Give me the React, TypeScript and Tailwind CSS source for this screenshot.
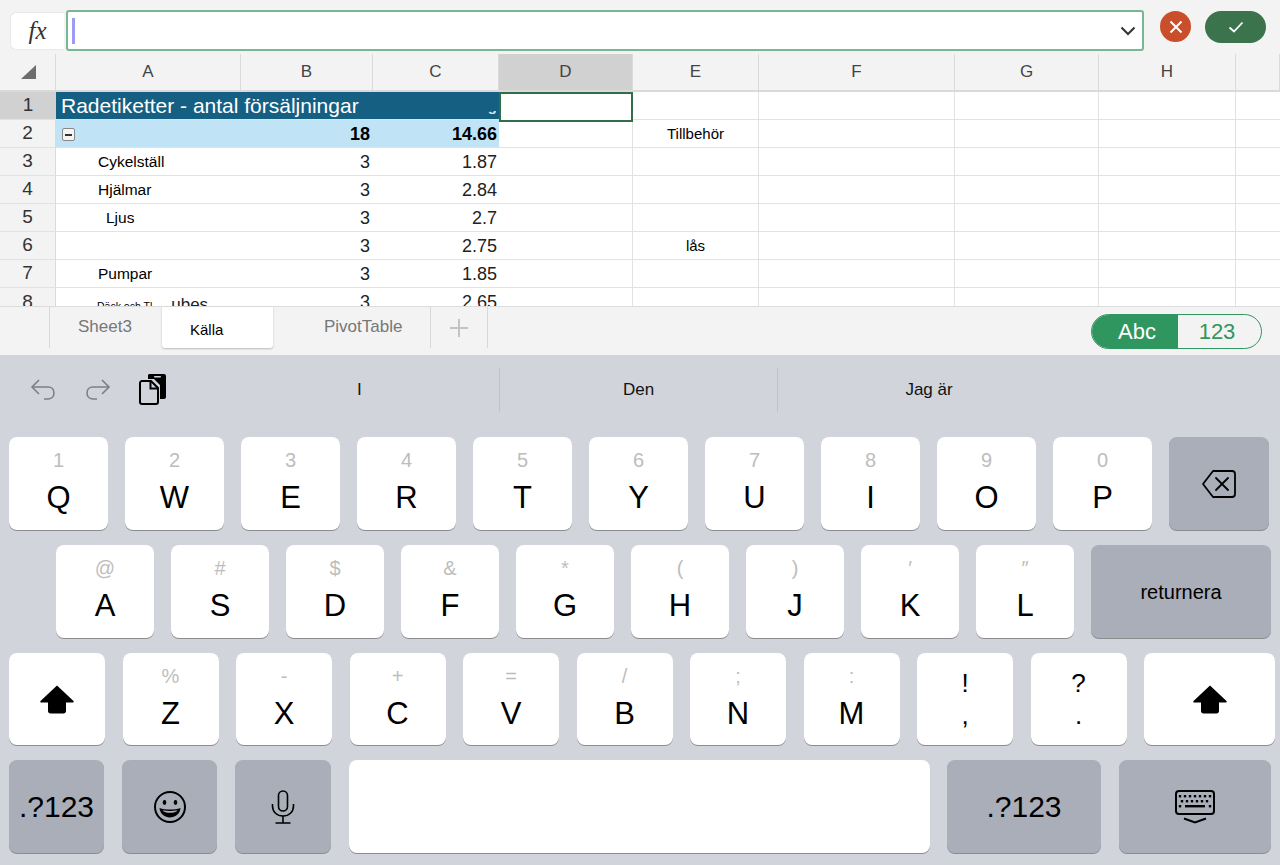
import React from "react";

const sans = "font-['Liberation_Sans',Arial,sans-serif]";

const columns = [
  { name: "A", w: "w-[185px]" },
  { name: "B", w: "w-[132px]" },
  { name: "C", w: "w-[126px]" },
  { name: "D", w: "w-[134px]" },
  { name: "E", w: "w-[126px]" },
  { name: "F", w: "w-[196px]" },
  { name: "G", w: "w-[144px]" },
  { name: "H", w: "w-[137px]" },
  { name: "", w: "w-[44px]" },
];

const rows = [
  { n: "2", h: "h-[28px]", a: "", b: "18", c: "14.66", e: "Tillbehör" },
  { n: "3", h: "h-[28px]", a: "Cykelställ", b: "3", c: "1.87" },
  { n: "4", h: "h-[28px]", a: "Hjälmar", b: "3", c: "2.84" },
  { n: "5", h: "h-[28px]", a: "Ljus", b: "3", c: "2.7" },
  { n: "6", h: "h-[28px]", a: "", b: "3", c: "2.75", e: "lås" },
  { n: "7", h: "h-[28px]", a: "Pumpar", b: "3", c: "1.85" },
];

const Undo = () => (
  <svg width="28" height="28" viewBox="0 0 28 28" fill="none" stroke="#7d7f85" strokeWidth="1.6">
    <path d="M10 4 L3 11 L10 18" />
    <path d="M3 11 H19 C23 11 25 14 25 17 C25 21 22 23 19 23 H15" />
  </svg>
);

const Redo = () => (
  <svg width="28" height="28" viewBox="0 0 28 28" fill="none" stroke="#7d7f85" strokeWidth="1.6">
    <path d="M18 4 L25 11 L18 18" />
    <path d="M25 11 H9 C5 11 3 14 3 17 C3 21 6 23 9 23 H13" />
  </svg>
);

const Clipboard = () => (
  <svg width="28" height="32" viewBox="0 0 28 32" fill="none">
    <path d="M9 1.5 C9 .7 9.7 0 10.500 0 H25 C26.100 0 27 .9 27 2 V23 C27 24.100 26.100 25 25 25 H21 V11 L15 5 H9 Z" fill="#000" />
    <rect x="15" y="2" width="7" height="1.500" rx=".7" fill="#d1d4db" />
    <path d="M3 7 H12 L19 14 V28 C19 29.100 18.100 30 17 30 H3 C1.900 30 1 29.100 1 28 V9 C1 7.900 1.900 7 3 7 Z" fill="#d1d4db" stroke="#000" strokeWidth="2" />
    <path d="M11.500 7 V14.500 H19" fill="none" stroke="#000" strokeWidth="2" />
  </svg>
);

const Shift = () => (
  <svg width="36" height="30" viewBox="0 0 36 30">
    <path d="M18 1.500 L34.500 17 C35 17.800 34.600 18.500 33.800 18.500 H27 V27 C27 28.500 26 29.500 24.500 29.500 H11.500 C10 29.500 9 28.500 9 27 V18.500 H2.200 C1.400 18.500 1 17.800 1.500 17 Z" fill="#000" />
  </svg>
);

const Backspace = () => (
  <svg width="36" height="30" viewBox="0 0 36 30" fill="none" stroke="#000" strokeWidth="1.800" strokeLinejoin="round">
    <path d="M12 2 H31 C33 2 34 3 34 5 V25 C34 27 33 28 31 28 H12 L2 15 Z" />
    <path d="M15 9 L27 21 M27 9 L15 21" strokeLinecap="round" />
  </svg>
);

const Smile = () => (
  <svg width="34" height="34" viewBox="0 0 34 34" fill="none" stroke="#000" strokeWidth="2">
    <circle cx="17" cy="17" r="15" />
    <ellipse cx="11.500" cy="12.500" rx="1.800" ry="2.400" fill="#000" stroke="none" />
    <ellipse cx="22.500" cy="12.500" rx="1.800" ry="2.400" fill="#000" stroke="none" />
    <path d="M6.500 18 C12 20 22 20 27.500 18 C27 24 22 27.500 17 27.500 C12 27.500 7 24 6.500 18 Z" fill="#000" stroke="none" />
    <path d="M9.500 20.200 C14 21.200 20 21.200 24.500 20.200 C23.500 22 20 22.800 17 22.800 C14 22.800 10.500 22 9.500 20.200 Z" fill="#a9aeb9" stroke="none" />
  </svg>
);

const Mic = () => (
  <svg width="24" height="34" viewBox="0 0 24 34" fill="none" stroke="#000" strokeWidth="1.600">
    <rect x="7.500" y="1" width="9" height="20" rx="4.500" />
    <path d="M1.500 14 V16 C1.500 22 6 26 12 26 C18 26 22.500 22 22.500 16 V14" />
    <path d="M12 26 V33 M4.500 33 H19.500" />
  </svg>
);

const Keyboard = () => (
  <svg width="40" height="34" viewBox="0 0 40 34" fill="none">
    <rect x="1" y="1" width="38" height="23" rx="3" stroke="#000" strokeWidth="2" />
    {[5, 10, 15, 20, 25, 30, 35].map((x) => (
      <rect key={"a" + x} x={x - 1.2} y="5" width="2.400" height="2.400" fill="#000" />
    ))}
    {[7, 12, 17, 22, 27, 32].map((x) => (
      <rect key={"b" + x} x={x - 1.2} y="10" width="2.400" height="2.400" fill="#000" />
    ))}
    <rect x="3.800" y="15" width="2.400" height="2.400" fill="#000" />
    <rect x="10" y="15" width="20" height="2.400" fill="#000" />
    <rect x="33.800" y="15" width="2.400" height="2.400" fill="#000" />
    <path d="M9 28.500 L20 32.500 L31 28.500" stroke="#000" strokeWidth="2" />
  </svg>
);

const Key = ({
  w,
  top,
  main,
  dark,
  children,
}: {
  w: string;
  top?: string;
  main?: string;
  dark?: boolean;
  children?: React.ReactNode;
}) => (
  <div
    className={`${w} h-full shrink-0 rounded-[8px] flex flex-col items-center justify-center shadow-[0_1px_0_#8a8c90] ${
      dark ? "bg-[#a9aeb9]" : "bg-white"
    }`}
  >
    {top !== undefined && <span className="h-[22px] mt-[-2px] text-[20px] leading-[22px] text-[#bdbdbd]">{top}</span>}
    {main && <span className="mt-[9px] text-[31px] leading-[36px] text-black">{main}</span>}
    {children}
  </div>
);

export default function App() {
  return (
    <div className={`${sans} w-[1280px] h-[865px] overflow-hidden flex flex-col bg-[#f3f3f3]`}>
      {/* formula bar */}
      <div className="h-[54px] shrink-0 flex items-start pl-[10px] bg-[#f3f3f3]">
        <div className="mt-[12px] w-[54px] h-[38px] bg-white rounded-l-[6px] border border-r-0 border-[#e8e8e8] flex items-center justify-center font-['Liberation_Serif',serif] italic text-[25px] text-[#333]">
          fx
        </div>
        <div className="ml-[2px] mt-[10px] w-[1078px] h-[41px] bg-white border-2 border-[#78b795] rounded-[3px] flex items-center justify-between pl-[4px] pr-[6px]">
          <div className="w-[3px] h-[26px] bg-[#9c9cf6]" />
          <svg width="16" height="10" viewBox="0 0 16 10" fill="none" stroke="#333" strokeWidth="2">
            <path d="M1.500 1.500 L8 8 L14.500 1.500" />
          </svg>
        </div>
        <div className="ml-[16px] mt-[11px] w-[31px] h-[31px] rounded-full bg-[#c84f2a] flex items-center justify-center">
          <svg width="14" height="14" viewBox="0 0 14 14" stroke="#fff" strokeWidth="2">
            <path d="M1.500 1.500 L12.500 12.500 M12.500 1.500 L1.500 12.500" />
          </svg>
        </div>
        <div className="ml-[14px] mt-[11px] w-[61px] h-[32px] rounded-full bg-[#3b734d] flex items-center justify-center">
          <svg width="16" height="12" viewBox="0 0 16 12" fill="none" stroke="#fff" strokeWidth="1.800">
            <path d="M1.500 6.500 L6 10.500 L14.500 1.500" />
          </svg>
        </div>
      </div>

      {/* sheet */}
      <div className="h-[252px] shrink-0 overflow-hidden bg-white">
        <div className="h-[38px] flex bg-[#f3f3f3] border-b-2 border-[#dadada] text-[#444] text-[17px]">
          <div className="w-[56px] shrink-0 flex items-center justify-center border-r border-[#dadada]">
            <svg width="16" height="16" viewBox="0 0 16 16">
              <path d="M16 1 V15 H1 Z" fill="#6d6d6d" />
            </svg>
          </div>
          {columns.map((c) => (
            <div
              key={c.name || "rest"}
              className={`${c.w} shrink-0 flex items-center justify-center border-r border-[#dadada] ${
                c.name === "D" ? "bg-[#d1d1d1]" : ""
              }`}
            >
              {c.name}
            </div>
          ))}
        </div>

        {/* row 1 */}
        <div className="h-[28px] flex border-b border-[#e2e2e2]">
          <div className="w-[56px] shrink-0 bg-[#d1d1d1] text-[#333] text-[19px] flex items-center justify-center">1</div>
          <div className="relative w-[443px] shrink-0 bg-[#156082] text-white text-[21px] leading-[28px] pl-[5px] whitespace-nowrap overflow-hidden">
            Radetiketter - antal försäljningar
            <div className="absolute right-[3px] bottom-0 h-[8px] w-[120px] overflow-hidden text-[15px] font-bold leading-[8px] text-right text-[#d8e6ee]">
              <span className="relative top-[-9px] block">Summa av rating</span>
            </div>
          </div>
          <div className="relative z-10 w-[134px] h-[30px] shrink-0 border-2 border-[#2f6f4a] bg-white" />
          <div className="w-[126px] shrink-0 border-r border-[#e2e2e2]" />
          <div className="w-[196px] shrink-0 border-r border-[#e2e2e2]" />
          <div className="w-[144px] shrink-0 border-r border-[#e2e2e2]" />
          <div className="w-[137px] shrink-0 border-r border-[#e2e2e2]" />
        </div>

        {rows.map((r) => (
          <Row key={r.n} {...r} />
        ))}

        {/* row 8, cut by the tab bar */}
        <div className="h-[28px] flex">
          <div className="w-[56px] shrink-0 bg-[#f3f3f3] border-r border-[#dadada] text-[#333] text-[19px] flex items-center justify-center">8</div>
          <div className="w-[185px] shrink-0 pl-[41px] pt-[4px] text-[10.500px] text-black whitespace-nowrap">
            Däck och Tl<span className="ml-[19px] text-[17px] text-[#222]">ubes</span>
          </div>
          <div className="w-[132px] shrink-0 pr-[3px] text-right text-[18px] text-[#222] leading-[28px]">3</div>
          <div className="w-[126px] shrink-0 pr-[2px] text-right text-[18px] text-[#222] leading-[28px]">2.65</div>
          <Blank />
        </div>
      </div>

      {/* sheet tabs */}
      <div className="h-[49px] shrink-0 flex items-start justify-between bg-[#f3f3f3] border-t border-[#dcdcdc] pl-[49px] pr-[18px]">
        <div className="flex items-start text-[17px] text-[#777]">
          <div className="w-[113px] h-[41px] border-l border-[#d8d8d8] pl-[28px] pt-[7px]">Sheet3</div>
          <div className="w-[111px] h-[41px] bg-white rounded-b-[3px] shadow-[0_1px_2px_#bbb] pl-[28px] pt-[12px] text-[15px] text-black">Källa</div>
          <div className="w-[157px] h-[41px] pl-[51px] pt-[7px]">PivotTable</div>
          <div className="w-[58px] h-[41px] border-x border-[#d8d8d8] flex items-center justify-center">
            <svg width="18" height="18" viewBox="0 0 18 18" stroke="#c4c4c4" strokeWidth="2">
              <path d="M9 0 V18 M0 9 H18" />
            </svg>
          </div>
        </div>
        <div className="mt-[7px] w-[171px] h-[35px] flex rounded-full border border-[#2f9660] overflow-hidden text-[22px]">
          <div className="w-[86px] bg-[#2f9660] text-white flex items-center justify-center pl-[4px]">Abc</div>
          <div className="flex-1 text-[#2f9660] flex items-center justify-center pr-[5px]">123</div>
        </div>
      </div>

      {/* keyboard */}
      <div className="flex-1 bg-[#d1d4db]">
        <div className="h-[82px] pt-[13px] flex items-start">
          <div className="w-[500px] h-[44px] flex items-center border-r border-[#bfc2c9]">
            <div className="ml-[29px] flex items-center gap-[27px]">
              <Undo />
              <Redo />
              <Clipboard />
            </div>
            <span className="ml-[190px] text-[17px] text-[#111]">I</span>
          </div>
          <div className="w-[278px] h-[44px] flex items-center justify-center border-r border-[#bfc2c9] text-[17px] text-[#111]">Den</div>
          <div className="w-[302px] h-[44px] flex items-center justify-center text-[17px] text-[#111]">Jag är</div>
        </div>

        <div className="pl-[9px] flex flex-col gap-[15px]">
          <div className="h-[93px] flex gap-[17px]">
            {[
              ["1", "Q"],
              ["2", "W"],
              ["3", "E"],
              ["4", "R"],
              ["5", "T"],
              ["6", "Y"],
              ["7", "U"],
              ["8", "I"],
              ["9", "O"],
              ["0", "P"],
            ].map(([t, m]) => (
              <Key key={m} w="w-[99px]" top={t} main={m} />
            ))}
            <Key w="w-[100px]" dark>
              <Backspace />
            </Key>
          </div>

          <div className="h-[93px] flex gap-[17px] pl-[47px]">
            {[
              ["@", "A"],
              ["#", "S"],
              ["$", "D"],
              ["&", "F"],
              ["*", "G"],
              ["(", "H"],
              [")", "J"],
              ["′", "K"],
              ["″", "L"],
            ].map(([t, m]) => (
              <Key key={m} w="w-[98px]" top={t} main={m} />
            ))}
            <Key w="w-[180px]" dark>
              <span className="text-[20px] text-black">returnera</span>
            </Key>
          </div>

          <div className="h-[92px] flex gap-[17.500px]">
            <Key w="w-[96px]">
              <Shift />
            </Key>
            {[
              ["%", "Z"],
              ["-", "X"],
              ["+", "C"],
              ["=", "V"],
              ["/", "B"],
              [";", "N"],
              [":", "M"],
            ].map(([t, m]) => (
              <Key key={m} w="w-[96px]" top={t} main={m} />
            ))}
            <Key w="w-[96px]">
              <span className="text-[26px] leading-[32px] text-black">!</span>
              <span className="text-[26px] leading-[32px] text-black">,</span>
            </Key>
            <Key w="w-[96px]">
              <span className="text-[26px] leading-[32px] text-black">?</span>
              <span className="text-[26px] leading-[32px] text-black">.</span>
            </Key>
            <Key w="w-[131px]">
              <Shift />
            </Key>
          </div>

          <div className="h-[93px] flex">
            <Key w="w-[95px] mr-[18px]" dark>
              <span className="text-[30px] text-black">.?123</span>
            </Key>
            <Key w="w-[95px] mr-[18px]" dark>
              <Smile />
            </Key>
            <Key w="w-[96px] mr-[18px]" dark>
              <Mic />
            </Key>
            <Key w="w-[581px] mr-[17px]" />
            <Key w="w-[154px] mr-[18px]" dark>
              <span className="text-[30px] text-black">.?123</span>
            </Key>
            <Key w="w-[152px]" dark>
              <Keyboard />
            </Key>
          </div>
        </div>
      </div>
    </div>
  );
}

function Blank({ e }: { e?: string }) {
  return (
    <>
      <div className="w-[134px] shrink-0 border-r border-[#e2e2e2]" />
      <div className="w-[126px] shrink-0 border-r border-[#e2e2e2] text-center text-[15px] text-black leading-[28px]">{e}</div>
      <div className="w-[196px] shrink-0 border-r border-[#e2e2e2]" />
      <div className="w-[144px] shrink-0 border-r border-[#e2e2e2]" />
      <div className="w-[137px] shrink-0 border-r border-[#e2e2e2]" />
    </>
  );
}

function Row({ n, h, a, b, c, e }: { n: string; h: string; a: string; b: string; c: string; e?: string }) {
  const total = n === "2";
  return (
    <div className={`${h} flex border-b border-[#e2e2e2]`}>
      <div className="w-[56px] shrink-0 bg-[#f3f3f3] border-r border-[#dadada] text-[#333] text-[19px] flex items-center justify-center">{n}</div>
      <div className={`w-[443px] shrink-0 flex leading-[28px] text-[18px] text-[#222] ${total ? "bg-[#c0e4f5] font-bold text-black" : ""}`}>
        <div className="w-[185px] pl-[42px] text-[15.500px] text-black font-normal">
          {total ? (
            <div className="ml-[-36px] mt-[8px] w-[13px] h-[13px] border border-[#888] rounded-[2px] bg-[#f4f4f4] flex items-center justify-center">
              <div className="w-[7px] h-[2px] bg-[#333]" />
            </div>
          ) : (
            <span className={n === "5" ? "ml-[8px]" : ""}>{a}</span>
          )}
        </div>
        <div className="w-[132px] pr-[3px] text-right">{b}</div>
        <div className="w-[126px] pr-[2px] text-right">{c}</div>
      </div>
      <Blank e={e} />
    </div>
  );
}
